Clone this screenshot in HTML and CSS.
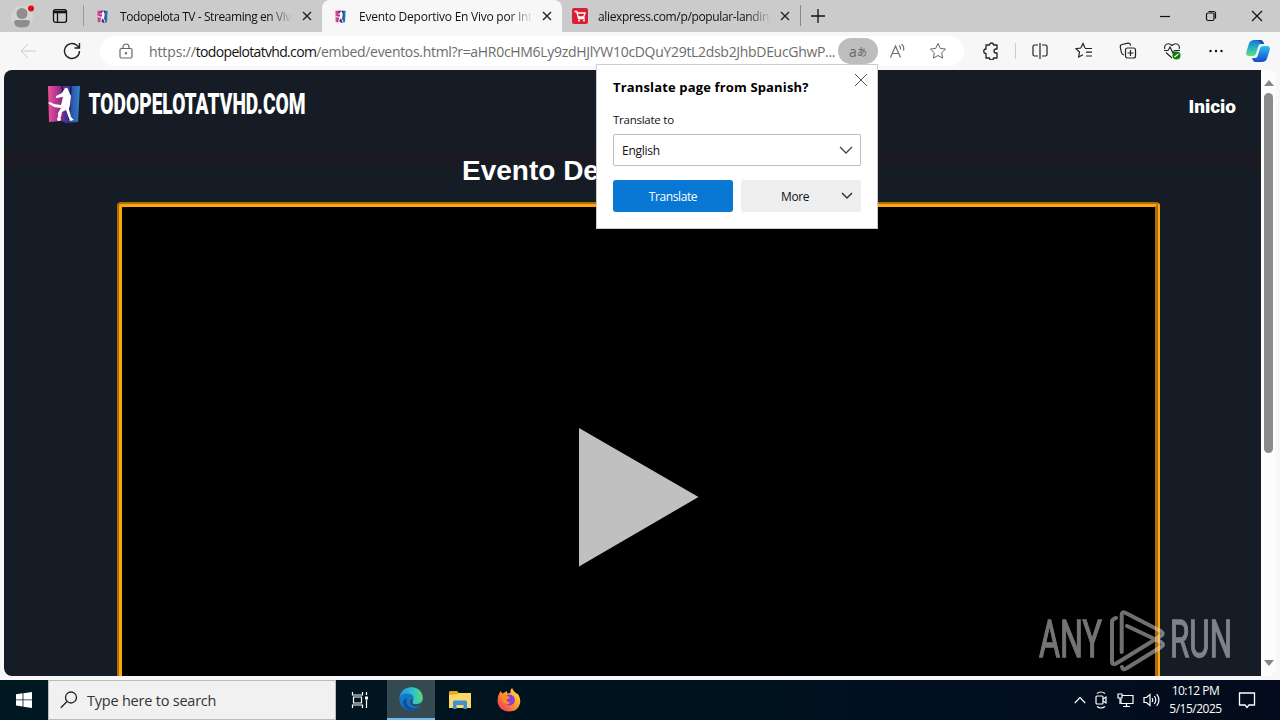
FILE: index.html
```html
<!DOCTYPE html>
<html lang="en">
<head>
  <meta charset="UTF-8">
  <meta name="viewport" content="width=device-width, initial-scale=1.0">
  <title>Evento Deportivo En Vivo por Internet</title>
  <link rel="stylesheet" href="styles.css">
</head>
<body>
  <svg class="defs" width="0" height="0">
    <defs>
      <linearGradient id="pinkBlue" x1="0" y1="0" x2="1" y2="0">
        <stop offset="0" stop-color="#f0509c"/>
        <stop offset=".42" stop-color="#8b2a86"/>
        <stop offset=".6" stop-color="#35339a"/>
        <stop offset="1" stop-color="#2b86c8"/>
      </linearGradient>
      <linearGradient id="edgeTop" x1="0" y1="0" x2="1" y2="0">
        <stop offset="0" stop-color="#1c8fd8"/>
        <stop offset=".6" stop-color="#2fc3cf"/>
        <stop offset="1" stop-color="#5fdd62"/>
      </linearGradient>
      <linearGradient id="fox" x1="1" y1="0" x2="0" y2="1">
        <stop offset="0" stop-color="#fff04a"/>
        <stop offset=".45" stop-color="#ff9a28"/>
        <stop offset="1" stop-color="#f5226c"/>
      </linearGradient>
      <linearGradient id="copA" x1="0" y1="0" x2="0" y2="1">
        <stop offset="0" stop-color="#1673d6"/>
        <stop offset=".5" stop-color="#22b5c4"/>
        <stop offset="1" stop-color="#63df78"/>
      </linearGradient>
      <linearGradient id="copB" x1="0" y1="0" x2="0" y2="1">
        <stop offset="0" stop-color="#29c0f0"/>
        <stop offset="1" stop-color="#1548cf"/>
      </linearGradient>
      <symbol id="player" viewBox="0 0 34 40">
        <path d="M1 2h32l-2 36-12 1-4-2-13 1z" fill="url(#pinkBlue)"/>
        <path d="M15 1l1 8M24 2l-2 34" stroke="#1b1550" stroke-width="1.5"/>
        <path d="M18 4q2-1 3 1l1 3 2 4-1 9-1 4 2 8 3 3-4 1-4-11-4 2-1 5-3 1 0-5 3-5-7-1-6-4 2-1 4 2 7 1 2-8-7 1 0-2 6-3z" fill="#fff"/>
        <circle cx="12" cy="35" r="2" fill="#fff"/>
      </symbol>
    </defs>
  </svg>

  <div class="tab-strip">
    <div class="strip-left">
      <svg class="avatar" width="30" height="28" viewBox="0 0 30 28">
        <circle cx="14" cy="15" r="11" fill="#d6d4d2"/>
        <circle cx="14" cy="11.500" r="5.500" fill="#908e8c"/>
        <path d="M6 20q0-2 3-2h10q3 0 3 2 0 5.500-8 5.500T6 20z" fill="#908e8c"/>
        <circle cx="23" cy="6.500" r="3" fill="#e00b1c"/>
      </svg>
      <svg width="16" height="16" viewBox="0 0 16 16" fill="none" stroke="#111" stroke-width="1.300">
        <rect x="1.500" y="1.700" width="13" height="12.600" rx="2"/>
        <path d="M1.500 4h13" stroke-width="2.600"/><path d="M5.500 4v10"/>
      </svg>
    </div>
    <div class="tab tab-first">
      <svg class="favicon" width="11" height="13"><use href="#player"/></svg>
      <span class="tab-title tab-one">Todopelota TV - Streaming en Vivo</span>
      <svg class="tab-close" width="10" height="10" viewBox="0 0 10 10"><path d="M1 1l8 8M9 1l-8 8"/></svg>
    </div>
    <div class="tab tab-active">
      <svg class="favicon" width="11" height="13"><use href="#player"/></svg>
      <span class="tab-title tab-two">Evento Deportivo En Vivo por Internet</span>
      <svg class="tab-close" width="10" height="10" viewBox="0 0 10 10"><path d="M1 1l8 8M9 1l-8 8"/></svg>
    </div>
    <div class="tab tab-last">
      <svg class="shop-icon" width="16" height="16" viewBox="0 0 16 16">
        <rect width="16" height="16" rx="2" fill="#d81f33"/>
        <path d="M2.500 3.500h2.300l1.700 7h6.300M5 5h8l-1.300 4H6" fill="none" stroke="#fff" stroke-width="1.300"/>
        <circle cx="7" cy="12.600" r="1" fill="#fff"/><circle cx="12" cy="12.600" r="1" fill="#fff"/>
      </svg>
      <span class="tab-title tab-three">aliexpress.com/p/popular-landing</span>
      <svg class="tab-close" width="10" height="10" viewBox="0 0 10 10"><path d="M1 1l8 8M9 1l-8 8"/></svg>
    </div>
    <svg class="new-tab" width="14" height="14" viewBox="0 0 14 14"><path d="M7 0v14M0 7h14" stroke="#111" stroke-width="1.300"/></svg>
    <div class="window-buttons">
      <svg width="12" height="12" viewBox="0 0 12 12"><path d="M1 6.500h10"/></svg>
      <svg width="12" height="12" viewBox="0 0 12 12"><rect x="1.500" y="3" width="7.500" height="7.500" rx="1.500"/><path d="M3.500 1.500h5q2 0 2 2v5"/></svg>
      <svg width="12" height="12" viewBox="0 0 12 12"><path d="M1 1l10 10M11 1L1 11"/></svg>
    </div>
  </div>

  <div class="toolbar">
    <div class="tool"><svg width="18" height="16" viewBox="0 0 18 16" stroke="#cdcdcd"><path d="M17 8H2M9 1L2 8l7 7"/></svg></div>
    <div class="tool"><svg width="18" height="18" viewBox="0 0 18 18" stroke="#222" stroke-width="1.400"><path d="M16.500 9a7.500 7.500 0 1 1-2.400-5.500l2 2M16.500 1v5h-5"/></svg></div>
    <div class="address-bar">
      <svg class="lock" width="14" height="16" viewBox="0 0 14 16" stroke="#666" stroke-width="1.200"><rect x="1" y="5.500" width="12" height="9.500" rx="1.500"/><path d="M4 5.500V4a3 3 0 0 1 6 0v1.500"/><circle cx="7" cy="10.300" r=".6" fill="#666"/></svg>
      <div class="url">https://<span class="host">todopelotatvhd.com</span><span class="path">/embed/eventos.html?r=aHR0cHM6Ly9zdHJlYW10cDQuY29tL2dsb2JhbDEucGhwP...</span></div>
      <div class="translate-chip"><span class="chip-latin">a</span><span class="chip-kana">あ</span></div>
      <div class="inner-tool"><svg width="18" height="16" viewBox="0 0 18 16" stroke="#707070" stroke-width="1.200"><path d="M1.500 14.500L6.500 3l5 11.500M3 10.500h7M10 2.500q2 1.500 1.500 4M12.500 1q3 2.500 2 6.500"/></svg></div>
      <div class="inner-tool"><svg width="18" height="18" viewBox="0 0 18 18" stroke="#666"><path d="M9 1.500l2.300 4.900 5.200.7-3.800 3.700.9 5.300L9 13.500l-4.600 2.600.9-5.300-3.800-3.700 5.200-.7z"/></svg></div>
    </div>
    <div class="tool tool-ext"><svg width="18" height="18" viewBox="0 0 18 18" stroke="#222" stroke-width="1.300"><path d="M4 3h3.500a2 2 0 0 1 4 0H15v4h-1a2 2 0 0 0 0 4h1v5h-3.500a2 2 0 0 1-4 0H4v-4.500a2.200 2.200 0 0 1 0-4.500z" stroke-linejoin="round"/></svg></div>
    <div class="tool-divider"></div>
    <div class="tool"><svg width="18" height="18" viewBox="0 0 18 18" stroke="#222" stroke-width="1.200"><path d="M7 3H3.500Q2 3 2 4.500v8Q2 14 3.500 14H7M11 3h3.500Q16 3 16 4.500v8q0 1.500-1.500 1.500H11M9 1v16"/></svg></div>
    <div class="tool"><svg width="18" height="18" viewBox="0 0 18 18" stroke="#222" stroke-width="1.200"><path d="M10 6L8 1.500 5.800 6l-4.800.7L4.500 10l-.8 5L8 12.700M10 6.500h7M11 10.200h6M11 14h6"/></svg></div>
    <div class="tool"><svg width="18" height="18" viewBox="0 0 18 18" stroke="#222" stroke-width="1.200"><path d="M5 13Q2.800 12.500 2.400 10.500L1.300 5Q1 3 3 2.500l6-1.300q2-.4 2.800 2.300"/><rect x="6.500" y="6" width="10" height="10" rx="2"/><path d="M11.500 8v6M8.500 11h6"/></svg></div>
    <div class="tool"><svg width="18" height="18" viewBox="0 0 18 18" stroke="#222" stroke-width="1.100"><path d="M2 7Q.8 4.500 3 2.600q3-2 6 .9 3-2.900 6-.9 2.200 1.900 1 4.400M1 8.500h4L7 5l3 6 1.500-2.500H17M3 10.500l6 5.500"/><circle class="status-ok" cx="13.500" cy="13.500" r="4" fill="#107c10" stroke="none"/><path d="M11.500 15l4-3" stroke="#fff"/></svg></div>
    <div class="tool"><svg class="dots" width="16" height="4" viewBox="0 0 16 4"><circle cx="2.500" cy="2" r="1.200"/><circle cx="8" cy="2" r="1.200"/><circle cx="13.500" cy="2" r="1.200"/></svg></div>
    <div class="copilot"><svg width="24" height="24" viewBox="0 0 24 24">
      <path d="M8.500 1h6q2.200 0 3 2.500L18 5h-3q-2 0-2.600 2l-2.500 8q-.7 2-2.900 2H3Q-.5 17 .3 13L3 4.500Q4.200 1 8.500 1z" fill="url(#copA)"/>
      <path d="M15.500 23h-6q-2.200 0-3-2.500L6 19h3q2 0 2.600-2l2.500-8q.7-2 2.900-2h4q3.500 0 2.700 4L21 19.500Q19.800 23 15.500 23z" fill="url(#copB)"/>
      <path d="M8.500 1h6q2.200 0 3 2.500L18 5q-3 0-4-1-1-3-5.500-3z" fill="#1749b2"/>
    </svg></div>
  </div>

  <div class="viewport">
    <div class="page">
      <div class="site-header">
        <div class="brand">
          <svg width="34" height="40"><use href="#player"/></svg>
          <svg class="brand-name" width="220" height="30"><text x="0.500" y="24" textLength="217" lengthAdjust="spacingAndGlyphs">TODOPELOTATVHD.COM</text></svg>
        </div>
        <span class="nav-link">Inicio</span>
      </div>
      <h1 class="event-title">Evento De</h1>
      <div class="video-frame">
        <svg class="play" width="120" height="140" viewBox="0 0 120 140"><path d="M0 1l119.500 69L0 139.500z" fill="#c0c0c0"/></svg>
      </div>
    </div>
    <div class="scrollbar">
      <svg width="10" height="6" viewBox="0 0 10 6"><path d="M5 0l5 6H0z" fill="#858585"/></svg>
      <div class="thumb"></div>
      <svg class="scroll-down" width="10" height="6" viewBox="0 0 10 6"><path d="M5 6l5-6H0z" fill="#858585"/></svg>
    </div>
  </div>

  <svg class="watermark" width="196" height="66" viewBox="0 0 196 66">
    <g class="mark-lines">
      <path d="M83.700 44V7q0-4 4-2l35 18q4 3 0 5L79 55q-5 3-5-2V14q0-3 4-4"/>
      <path d="M89 18l34 16q4 3 0 5L89 60q-4 3-5-1"/>
    </g>
    <g class="mark-text">
      <text x="1" y="49" textLength="63" lengthAdjust="spacingAndGlyphs" transform="translate(0 -10.500) scale(1 1.220)">ANY</text>
      <text x="132" y="49" textLength="62" lengthAdjust="spacingAndGlyphs" transform="translate(0 -10.500) scale(1 1.220)">RUN</text>
    </g>
  </svg>

  <div class="translate-popup">
    <svg class="popup-close" width="14" height="14" viewBox="0 0 14 14"><path d="M1 1l12 12M13 1L1 13" stroke="#555"/></svg>
    <h2 class="popup-title">Translate page from Spanish?</h2>
    <p class="popup-label">Translate to</p>
    <div class="select">English<svg width="14" height="8" viewBox="0 0 14 8" fill="none" stroke="#444" stroke-width="1.300"><path d="M1 1l6 6 6-6"/></svg></div>
    <div class="popup-actions">
      <div class="btn btn-primary">Translate</div>
      <div class="btn btn-more"><span>More</span><svg width="12" height="8" viewBox="0 0 12 8" fill="none" stroke="#333" stroke-width="1.500"><path d="M1 1l5 5 5-5"/></svg></div>
    </div>
  </div>

  <div class="taskbar">
    <div class="start"><svg width="16" height="16" viewBox="0 0 16 16" fill="#fff"><path d="M0 2.200L6.600 1.300v6.200H0zM7.400 1.200L16 0v7.500H7.400zM0 8.300h6.600v6.200L0 13.600zM7.400 8.300H16V16l-8.600-1.200z"/></svg></div>
    <div class="search">
      <svg width="18" height="18" viewBox="0 0 18 18" fill="none" stroke="#222" stroke-width="1.300"><circle cx="11" cy="6.500" r="5.500"/><path d="M7 10.500L.8 16.800"/></svg>
      <span>Type here to search</span>
    </div>
    <div class="task task-view"><svg width="18" height="18" viewBox="0 0 18 18" fill="none" stroke="#fff" stroke-width="1.200"><path d="M1.500 1v3h10V1M1.500 17v-3h10v3M2.500 6h8v6h-8zM15.500 1v3M15.500 9v8"/><path d="M14 5.500h3v3h-3z" fill="#fff" stroke="none"/></svg></div>
    <div class="task task-open"><svg width="24" height="24" viewBox="0 0 24 24">
      <circle cx="12" cy="12" r="11.700" fill="#1578c4"/>
      <path d="M.4 11Q2 .3 12.500.3C20 .3 24 6 23.700 11c-.2 4-3.500 6-7 6-3 0-4.200-1.500-3-3 3-4-1-7.500-5-7.500-4 0-7.300 2-8.300 4.500z" fill="url(#edgeTop)"/>
      <path d="M8 11q-2 7 4 9.500 5 2 10-2-4 5.500-10.500 5.200Q4 22 4 16q0-4 4-5z" fill="#124f9c"/>
      <path d="M13.700 14q-1.500 3.500 3.300 3.500 3.500 0 6-2l-1.500 3q-2.500 1.500-5.500 1-4.500-.5-5-4 0-2.500 1.700-3.500 1.500.5 1 2z" fill="#344a50"/>
    </svg></div>
    <div class="task"><svg width="22" height="20" viewBox="0 0 22 20">
      <path d="M0 2q0-1 1-1h7l2 2h11q1 0 1 1v13H0z" fill="#e9a61f"/>
      <path d="M0 5l9-1 1-1h12v15H0z" fill="#fcd869"/>
      <path d="M4 19v-7q0-1.500 1.500-1.500h11Q18 10.500 18 12v7h-3.500v-4h-7v4z" fill="#3c91d2"/>
    </svg></div>
    <div class="task"><svg width="24" height="24" viewBox="0 0 24 24">
      <path d="M3.500 3l2 2.500 2-1 2-1.500 1 2.500 3-.5Q13 2 15 0q1 3 4.500 5.500L21 6q3 5 2 9.500Q21 23.500 12 23.500T.7 15Q0 8 3.500 3z" fill="url(#fox)"/>
      <circle cx="12.500" cy="12" r="5.400" fill="#873ee0"/>
      <path d="M4 7q4-2 6 1l3 1q-1 2-3.500 2.500Q10 15 14 14q-3 4-7.500.5Q4 12 4 7z" fill="#ff8a22"/>
    </svg></div>
    <div class="tray">
      <svg width="12" height="8" viewBox="0 0 12 8"><path d="M.8 7L6 1.500 11.200 7"/></svg>
      <svg width="13" height="18" viewBox="0 0 13 18"><rect x="1" y="5" width="7" height="8" rx="1"/><path d="M8 8l3-2v6l-3-2M2 2.500q4-3 8 0M2 15.500q4 3 8 0"/></svg>
      <svg width="17" height="15" viewBox="0 0 17 15"><path d="M5 2.500h11v8H4V6M9.500 10.500v3M6 13.500h7"/><path d="M1 1h4v4H1zM3 5v6"/></svg>
      <svg width="17" height="14" viewBox="0 0 17 14"><path d="M1 4.500h2.500L7 1.500v11L3.500 9.500H1zM9 5q1.500 2 0 4M11.300 3q3 4 0 8M13.700 1.200q4.500 5.800 0 11.600"/></svg>
    </div>
    <div class="clock"><span class="time">10:12 PM</span><span>5/15/2025</span></div>
    <div class="notice"><svg width="18" height="17" viewBox="0 0 18 17" fill="none" stroke="#fff" stroke-width="1.300"><path d="M1.500 1h15v12H11l-2 2.500L7 13H1.500z"/></svg></div>
  </div>
</body>
</html>
```
FILE: styles.css
```css
* {
  --strip-color: #cbcbcb;
  --toolbar-color: #f7f7f7;
  --page-color: #151c25;
  box-sizing: border-box;
}
body {
  display: flex;
  flex-direction: column;
  width: 1280px;
  height: 720px;
  margin: 0;
  overflow: hidden;

  background-color: var(--toolbar-color);
  color: #111;
  font-family: "Open Sans", "Noto Sans", sans-serif;
  font-size: 12px;
}
svg {
  display: block;
  flex: none;
}
.defs {
  position: absolute;
}

/* tabs */
.tab-strip {
  display: flex;
  flex: none;
  height: 32px;
  background-color: var(--strip-color);
}
.strip-left {
  display: flex;
  align-items: center;
  gap: 14px;
  width: 83px;
  padding-left: 8px;
}
.tab {
  display: flex;
  align-items: center;
  width: 240px;
  height: 32px;
  padding: 0 10px 0 13px;
}
.tab-first {
  width: 239px;
  border-left: 1px solid #999;
  border-image: linear-gradient(transparent 18%, #999 18% 80%, transparent 80%) 1;
}
.tab-active {
  border-radius: 8px 8px 0 0;
  background-color: var(--toolbar-color);
}
.tab-last {
  width: 239px;
  padding-left: 10px;
  border-right: 1px solid #888;
  border-image: linear-gradient(transparent 18%, #888 18% 80%, transparent 80%) 1;
}
.tab-title {
  width: 174px;
  margin: 0 9px 0 13px;
  overflow: hidden;
  letter-spacing: -.25px;
  white-space: nowrap;
  mask-image: linear-gradient(to right, #000 86%, transparent);
}
.tab-one {
  margin-left: 12px;
  letter-spacing: -.42px;
}
.tab-three {
  margin: 0 9px 0 10px;
  letter-spacing: -.36px;
}
.tab-close {
  stroke: #222;
  stroke-width: 1.4;
}
.new-tab {
  margin: 9px 0 0 10px;
}
.window-buttons {
  display: flex;
  align-items: center;
  gap: 34px;
  margin-left: auto;
  padding-right: 17px;
  fill: none;
  stroke: #111;
  stroke-width: 1.2;
}

/* toolbar */
.toolbar {
  display: flex;
  flex: none;
  align-items: center;
  height: 38px;
  padding-left: 6px;
  background-color: var(--toolbar-color);
}
.toolbar svg {
  fill: none;
}
.toolbar .dots {
  fill: #111;
}
.tool {
  display: flex;
  justify-content: center;
  width: 44px;
}
.tool-ext {
  margin-left: 5px;
}
.tool-divider {
  width: 1px;
  height: 16px;
  margin: 0 2px;
  background-color: #ccc;
}
.copilot {
  margin-left: 8px;
}
.address-bar {
  display: flex;
  align-items: center;
  width: 864px;
  height: 30px;
  margin-left: 6px;
  border-radius: 15px;
  background-color: #fff;
}
.lock {
  margin: 0 16px 0 19px;
}
.url {
  width: 689px;
  color: #6c6c6c;
  font-size: 14px;
  letter-spacing: -.12px;
  white-space: nowrap;
}
.host {
  color: #111;
  letter-spacing: -.67px;
}
.path {
  letter-spacing: -.31px;
}
.translate-chip {
  display: flex;
  align-items: center;
  justify-content: center;
  width: 40px;
  height: 26px;
  border-radius: 13px;
  background-color: #bdbdbd;
  color: #666;
}
.chip-latin {
  font-size: 14px;
}
.chip-kana {
  font-family: "Noto Sans CJK JP", sans-serif;
  font-size: 10px;
}
.inner-tool {
  display: flex;
  justify-content: center;
  width: 40px;
}

/* web page */
.viewport {
  display: flex;
  flex: none;
  width: 1272px;
  height: 606px;
  margin-left: 4px;
  overflow: hidden;
  border-radius: 8px;
  background-color: #fcfcfc;
}
.page {
  width: 1257px;
  background: linear-gradient(var(--page-color) 78px, #1a1a23 86px 92px, var(--page-color) 102px);
  color: #fff;
  font-family: "Liberation Sans", Arial, sans-serif;
}
.site-header {
  display: flex;
  align-items: flex-start;
  justify-content: space-between;
  height: 81px;
  padding: 14px 25px 0 43px;
}
.brand {
  display: flex;
  gap: 7px;
}
.brand-name {
  margin-top: 6px;
  fill: #fff;
  font-family: Roboto, sans-serif;
  font-size: 29px;
  font-weight: 900;
}
.nav-link {
  margin-top: 11px;
  font-family: Roboto, sans-serif;
  font-size: 19px;
  font-weight: 900;
  line-height: 24px;
}
.event-title {
  height: 51px;
  margin: 0;
  padding-left: 458px;
  font-size: 28px;
  line-height: 39px;
}
.video-frame {
  width: 1043px;
  height: 600px;
  margin-left: 113px;
  padding: 220px 0 0 457px;
  border: 5px groove #ffa50f;
  border-radius: 4px;
  background-color: #000;
}
.scrollbar {
  display: flex;
  flex-direction: column;
  align-items: center;
  width: 15px;
  padding: 10px 0;
}
.thumb {
  width: 9px;
  height: 360px;
  margin-top: 7px;
  border-radius: 5px;
  background-color: #8b8b8b;
}
.scroll-down {
  margin-top: auto;
}

/* stream overlay, lies above the page */
.watermark {
  position: absolute;
  left: 1038px;
  top: 608px;
  opacity: .5;
}
.mark-lines {
  fill: none;
  stroke: #e0e0e0;
  stroke-width: 4;
  stroke-linejoin: round;
  stroke-linecap: round;
}
.mark-text {
  fill: #e8e8e8;
  stroke: #e8e8e8;
  stroke-width: 1.1;
  font-family: Roboto, sans-serif;
  font-size: 43px;
}

/* translate popup */
.translate-popup {
  position: absolute;
  left: 596px;
  top: 64px;
  width: 282px;
  height: 165px;
  padding: 12px 16px;
  border: 1px solid #ccc;
  background-color: #fff;
}
.popup-close {
  position: absolute;
  right: 9px;
  top: 8px;
}
.popup-title {
  margin: 0;
  color: #000;
  font-size: 13px;
  letter-spacing: .15px;
  line-height: 20px;
  white-space: nowrap;
}
.popup-label {
  margin: 14px 0 5px;
  font-size: 11.5px;
  letter-spacing: -.25px;
  line-height: 18px;
}
.select {
  display: flex;
  align-items: center;
  justify-content: space-between;
  height: 32px;
  padding: 0 7px 0 8px;
  border: 1px solid #bdbdbd;
  border-radius: 2px;
  letter-spacing: -.25px;
}
.popup-actions {
  display: flex;
  gap: 8px;
  margin-top: 14px;
}
.btn {
  display: flex;
  align-items: center;
  justify-content: center;
  width: 120px;
  height: 32px;
  border-radius: 3px;
  letter-spacing: -.4px;
}
.btn-primary {
  background-color: #0878d4;
  color: #fff;
}
.btn-more {
  justify-content: space-between;
  padding: 0 8px 0 40px;
  background-color: #eee;
}

/* taskbar */
.taskbar {
  display: flex;
  height: 40px;
  margin-top: 4px;
  background: linear-gradient(to right, #001820, #00131f 50%, #030b1d);
  color: #fff;
}
.start,
.task {
  display: flex;
  align-items: center;
  justify-content: center;
  width: 48px;
}
.search {
  display: flex;
  align-items: center;
  gap: 9px;
  width: 288px;
  padding-left: 11px;
  border: 1px solid #bbb;
  background-color: #f1f1f1;
  color: #333;
  font-size: 14.5px;
  letter-spacing: -.22px;
}
.task {
  width: 49px;
}
.task-view {
  width: 51px;
  padding-right: 3px;
}
.task-open {
  width: 48px;
  border-bottom: 2px solid #76b9ed;
  background-color: #344a50;
}
.tray {
  display: flex;
  align-items: center;
  gap: 9px;
  margin-left: auto;
  fill: none;
  stroke: #fff;
  stroke-width: 1.2;
}
.clock {
  display: flex;
  flex-direction: column;
  align-items: center;
  width: 70px;
  padding: 2px 0 0 1px;
  letter-spacing: -.5px;
  line-height: 18px;
}
.notice {
  display: flex;
  align-items: center;
  width: 50px;
  padding-left: 8px;
}
```
